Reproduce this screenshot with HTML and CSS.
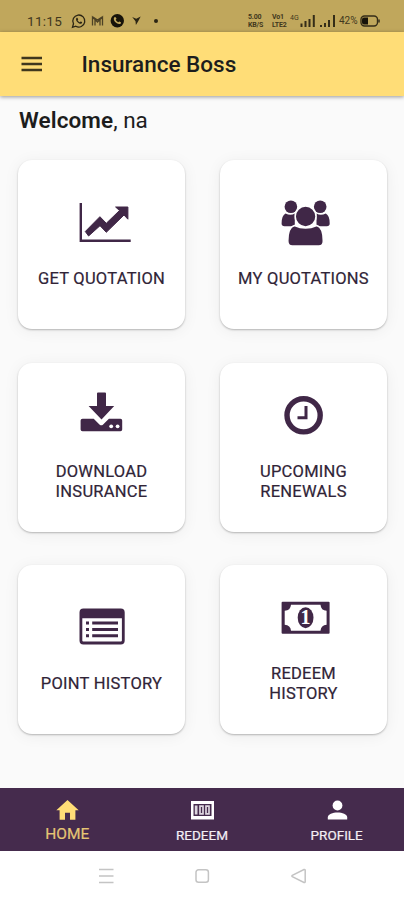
FILE: index.html
```
<!DOCTYPE html>
<html lang="en">
	<head>
		<title>Insurance Boss</title>
		<meta charset="utf-8" />
		<meta name="viewport" content="width=device-width, initial-scale=1" />
		<link rel="stylesheet" href="styles.css">
	</head>
	<body>
		<div class="status-bar">
			<div class="status-left">
				<span class="time">11:15</span>
				<svg width="90" height="16" viewBox="0 0 90 16">
					<!-- whatsapp -->
					<path d="M1.5 14.3l1-3.5a6 6 0 1 1 2.3 2.4z" fill="none" stroke="#2b2514" stroke-width="1.3"/>
					<path d="M5.3 5.2c.8-1 1.4-.2 1.9 1.2l-.6.9c.6 1 1.2 1.6 2.2 2l.9-.7c1.3.5 2 .9 1 2-2.8.9-6.7-3-5.4-5.4z" fill="#2b2514"/>
					<!-- mail -->
					<path d="M21.500 12.500V4l5 5 5-5v8.500M24 12.500V7M29 12.500V7M22 4l4.500 3L31 4" fill="none" stroke="#4d4225" stroke-width="1.300"/>
					<!-- call -->
					<circle cx="46.300" cy="7.700" r="6.700" fill="#17130a"/>
					<path d="M43.100 4.500c1-1.300 1.900-.4 2.400 1.200l-.8 1c.6 1.200 1.400 2 2.600 2.600l1-.9c1.600.5 2.500 1.200 1.200 2.300-3.200 1.500-8-3.300-6.400-6.200z" fill="#c0a75c"/>
					<path d="M61.200 4l4 1.700 4.500-2.200-2.500 4.700-2.300 3.800-.4-3.800z" fill="#2b2514"/>
					<circle cx="85" cy="8" r="2" fill="#2b2514"/>
				</svg>
			</div>
			<div class="status-right">
				<div class="tiny"><b>5.00</b><b>KB/S</b></div>
				<div class="tiny volte"><b>Vo1</b><b>LTE2</b></div>
				<div class="net">4G</div>
				<svg class="signal" width="36" height="14" viewBox="0 0 36 14">
					<path d="M1.500 9.500V13M5.500 7v6M9.500 5v8M13.800 1v12M21 11v2M25 9v4M29 6v7M34 1v12" stroke="#352d18" stroke-width="2"/>
				</svg>
				<span class="percent">42%</span>
				<svg width="20" height="12" viewBox="0 0 20 12">
					<rect x="1" y="1" width="16.500" height="10" rx="3.500" fill="none" stroke="#352d18" stroke-width="1.400"/>
					<path d="M4 2.500h4v7H4a2 2 0 0 1-2-2v-3a2 2 0 0 1 2-2z" fill="#17130a"/>
					<path d="M19 4.500v3" stroke="#352d18" stroke-width="1.500"/>
				</svg>
			</div>
		</div>

		<header class="app-bar">
			<svg class="menu" width="22" height="16" viewBox="0 0 22 16">
				<path d="M.5 2h20.500M.5 8h20.500M.5 14h20.500" stroke="#40371d" stroke-width="2.300"/>
			</svg>
			<h1>Insurance Boss</h1>
		</header>

		<main>
			<p class="welcome"><b>Welcome</b>, na</p>
			<div class="cards">
				<a class="card">
					<svg class="icon" viewBox="0 0 60 48">
						<path d="M8.800 2v37.700H58.700" fill="none" stroke="#402747" stroke-width="2.400"/>
						<path d="M13.300 30.500L27.900 15.700l6.400 6.600L47.500 9.500 43.600 6h12.300v12.200L52 14 34.300 31.300 28 24.700 16.600 35z" stroke="#402747"/>
					</svg>
					<span>GET QUOTATION</span>
				</a>
				<a class="card">
					<svg class="icon" viewBox="0 0 60 48">
						<circle cx="16.900" cy="5.700" r="6.300"/>
						<circle cx="46.200" cy="5.700" r="6.300"/>
						<path d="M11.500 12.500q5.200 2.500 9.300 0v12.700H10.500Q7.600 25.200 7.600 22.500q0-8 3.900-10z"/>
						<path d="M51.800 12.500q-5.200 2.500-9.300 0v12.700h10.300q2.900 0 2.900-2.700 0-8-3.900-10z"/>
						<path class="cut" d="M20.500 24.500q11 5 22.200 0 6.600 1.700 6.600 15.500 0 5-4.500 5H18.300q-4.500 0-4.500-5 0-13.800 6.700-15.500z"/>
						<circle class="cut" cx="31.600" cy="15.500" r="10.400"/>
					</svg>
					<span>MY QUOTATIONS</span>
				</a>
				<a class="card">
					<svg class="icon" viewBox="0 0 60 48">
						<path d="M10.500 24.700h11.200l6 6q1.600 1.200 3.200 0l6-6h11.500q1.800 0 1.800 1.800v9q0 1.800-1.800 1.800H10.500q-1.900 0-1.900-1.800v-9q0-1.800 1.900-1.800z"/>
						<path d="M26-1.400h7q1 0 1 1V12h8.200L29.500 25.500 16.600 12H25V-.4q0-1 1-1z"/>
						<circle cx="39.200" cy="32.300" r="1.900" fill="#fff"/>
						<circle cx="45.600" cy="32.300" r="1.900" fill="#fff"/>
					</svg>
					<span>DOWNLOAD<br>INSURANCE</span>
				</a>
				<a class="card">
					<svg class="icon" viewBox="0 0 60 48">
						<circle cx="29.600" cy="21.300" r="16.600" fill="none" stroke="#402747" stroke-width="5.400"/>
						<path d="M32 12v11.700h-8.500" fill="none" stroke="#402747" stroke-width="3"/>
					</svg>
					<span>UPCOMING<br>RENEWALS</span>
				</a>
				<a class="card">
					<svg class="icon" viewBox="0 0 60 48">
						<rect x="8.900" y="4" width="42.400" height="33" rx="2.500" fill="none" stroke="#402747" stroke-width="2.800"/>
						<path d="M8 4h44v8.300H8z"/>
						<path d="M14 17h3M14 23.400h3M14 29.800h3M20.200 17H46M20.200 23.400H46M20.200 29.800H46" stroke="#402747" stroke-width="3"/>
					</svg>
					<span>POINT HISTORY</span>
				</a>
				<a class="card">
					<svg class="icon" viewBox="0 0 60 48">
						<rect x="7.600" y="5.700" width="48" height="32" rx="1"/>
						<path d="M17 8.700h29.500q.5 5.800 6.100 6v14q-5.600.5-6.100 6H17q-.5-5.500-6.300-6v-14q5.800-.2 6.300-6z" fill="#fff"/>
						<ellipse cx="31.600" cy="21.700" rx="7.900" ry="10.500"/>
						<text class="note" x="31.400" y="28.400">1</text>
					</svg>
					<span>REDEEM<br>HISTORY</span>
				</a>
			</div>
		</main>

		<nav class="tabs">
			<a class="tab active">
				<svg width="24" height="22" viewBox="0 0 24 22"><path d="M12.500 1l11.200 10.300h-3.300v9.500h-5.400v-7h-5v7H4.600v-9.500H1.300z" fill="#ffdd77"/></svg>
				<span>HOME</span>
			</a>
			<a class="tab">
				<svg width="24" height="22" viewBox="0 0 24 22">
					<path d="M1 2h23v18.500H1z" fill="#fff"/>
					<path d="M3.500 5h18v12H3.500z" fill="#452b4d"/>
					<path d="M4.800 6.500h2.700v9H4.800z" fill="#ddd6df"/>
					<path d="M10 7.200h3v7.600h-3zM16 7.200h3v7.600h-3z" fill="none" stroke="#ddd6df" stroke-width="1.700"/>
				</svg>
				<span>REDEEM</span>
			</a>
			<a class="tab">
				<svg width="24" height="22" viewBox="0 0 24 22">
					<circle cx="12.500" cy="6.500" r="4.900" fill="#fff"/>
					<path d="M2.800 20.500v-2c0-3.300 5-5 9.700-5s9.700 1.700 9.700 5v2z" fill="#fff"/>
				</svg>
				<span>PROFILE</span>
			</a>
		</nav>

		<div class="system-nav">
			<svg width="16" height="16" viewBox="0 0 16 16"><path d="M1 1.500h14.500M1 8h14.500M1 14.500h14.500"/></svg>
			<svg width="16" height="16" viewBox="0 0 16 16"><rect x="2" y="1.800" width="12.400" height="12.400" rx="2.500"/></svg>
			<svg width="16" height="16" viewBox="0 0 16 16"><path d="M13 1.500q1.200-.4 1.200.8v11.400q0 1.200-1.200.8L1.300 8.700q-.8-.7 0-1.300z"/></svg>
		</div>
	</body>
</html>
```
FILE: styles.css
```
body {
	margin: 0;
	height: 900px;
	display: flex;
	flex-direction: column;
	overflow: hidden;
	font-family: Roboto, sans-serif;
	background: #fafafa;
	color: #1d1d1d;
}

.status-bar {
	height: 32px;
	box-sizing: border-box;
	padding: 10px 24px 0 27px;
	display: flex;
	justify-content: space-between;
	background: #c0a75c;
	color: #40371d;
}
.status-left,
.status-right {
	display: flex;
	align-items: center;
	height: 21px;
}
.time {
	width: 44px;
	font-size: 13.5px;
	letter-spacing: 0.3px;
}
.tiny {
	display: flex;
	flex-direction: column;
	width: 24px;
	font-size: 7px;
	line-height: 8px;
	letter-spacing: -0.2px;
}
.volte {
	width: 18px;
}
.net {
	width: 10px;
	height: 14px;
	font-size: 7px;
	line-height: 8px;
}
.signal {
	margin-right: 3px;
}
.percent {
	width: 21px;
	font-size: 10px;
}

.app-bar {
	height: 64px;
	flex: none;
	display: flex;
	align-items: center;
	padding-left: 21px;
	background: #ffdd77;
	box-shadow: 0 1px 4px rgba(0,0,0,0.4);
}
h1 {
	margin: 0 0 0 38.5px;
	font-size: 22.5px;
	font-weight: 500;
	letter-spacing: 0;
}

main {
	flex: 1;
	padding: 0 17px 0 18px;
}
.welcome {
	margin: 10px 0 26px 1px;
	font-size: 22.5px;
	line-height: 28px;
}
.welcome b {
	font-weight: 600;
	letter-spacing: 0.1px;
}

.cards {
	display: grid;
	grid-template-columns: 167px 167px;
	grid-auto-rows: 169px;
	gap: 33.5px 35px;
}
.card {
	display: flex;
	flex-direction: column;
	align-items: center;
	justify-content: center;
	border-radius: 14px;
	background: #fff;
	box-shadow: 0 1px 2px rgba(0,0,0,0.26), 0 2px 16px rgba(0,0,0,0.06);
	color: #302437;
	font-size: 16.5px;
	line-height: 20px;
	letter-spacing: 0.25px;
	text-align: center;
	-webkit-text-stroke: 0.2px #302437;
}
.card span {
	padding-top: 1px;
	margin-bottom: -1px;
}
.icon {
	width: 60px;
	height: 48px;
	margin-bottom: 19px;
	overflow: visible;
	fill: #402747;
}
.cut {
	stroke: #fff;
	stroke-width: 1.5px;
}
.note {
	fill: #fff;
	font: bold 20px "Liberation Serif", serif;
	letter-spacing: 0;
	text-anchor: middle;
}

.tabs {
	height: 63px;
	flex: none;
	display: grid;
	grid-template-columns: repeat(3, 1fr);
	background: #452b4d;
}
.tab {
	display: flex;
	flex-direction: column;
	align-items: center;
	padding-top: 11px;
	color: #f3eff4;
	font-size: 13.5px;
	line-height: 16px;
	-webkit-text-stroke: 0.2px;
}
.tab span {
	margin-top: 6px;
}
.active {
	color: #e5c574;
	font-size: 15.5px;
}
.active span {
	margin-top: 5px;
}

.system-nav {
	height: 49px;
	flex: none;
	display: flex;
	justify-content: center;
	gap: 80.5px;
	box-sizing: border-box;
	padding-top: 17px;
	background: #fff;
}
.system-nav svg {
	fill: none;
	stroke: #c4c4c4;
	stroke-width: 1.5px;
}
```
